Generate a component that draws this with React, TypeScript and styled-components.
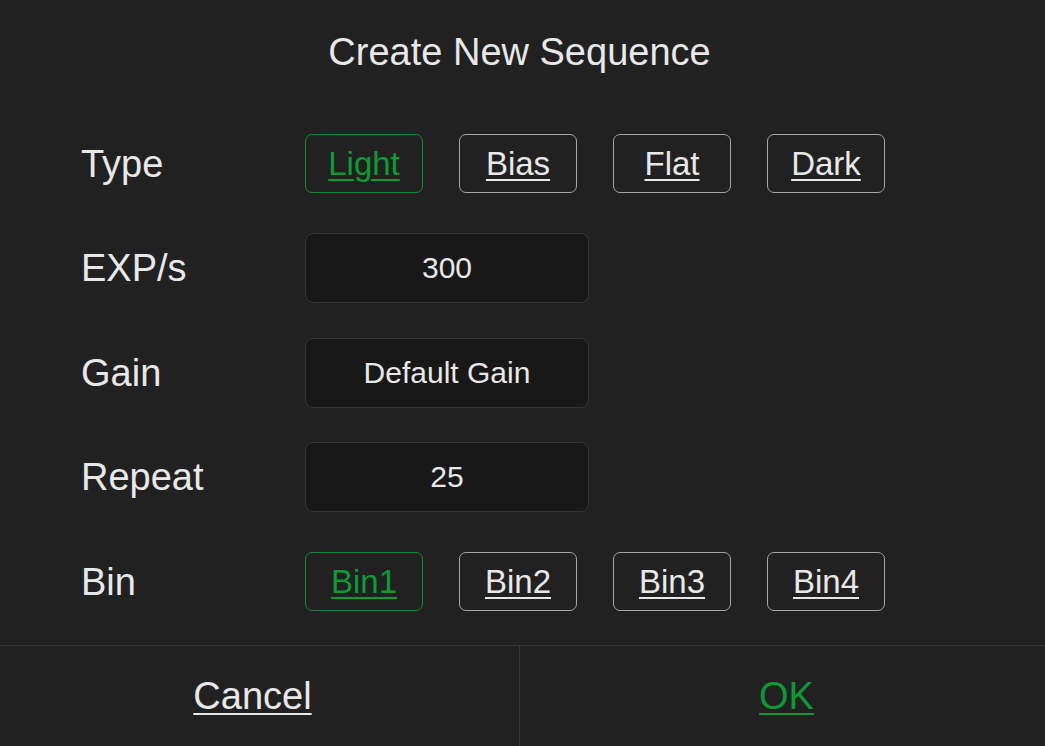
import React, { useState } from 'react';
import styled, { createGlobalStyle } from 'styled-components';

const GlobalStyle = createGlobalStyle`
  html, body {
    margin: 0;
    padding: 0;
    background: #212121;
  }
  body {
    font-family: "Liberation Sans", Arial, sans-serif;
  }
`;

const Dialog = styled.div`
  display: flex;
  flex-direction: column;
  width: 1045px;
  height: 746px;
  background: #212121;
  color: #e8e8e8;
  overflow: hidden;
`;

const Header = styled.div`
  height: 112px;
  display: flex;
  justify-content: center;
  align-items: flex-start;
  padding: 30px 6px 0 0;
  box-sizing: border-box;
`;

const Title = styled.h1`
  margin: 0;
  font-size: 38px;
  line-height: 44px;
  font-weight: 400;
  color: #e8e8e8;
`;

const Form = styled.div`
  display: flex;
  flex-direction: column;
  padding-left: 81px;
`;

const Row = styled.div`
  height: 104.5px;
  display: flex;
  align-items: center;
`;

const Label = styled.div`
  width: 224px;
  font-size: 38px;
  color: #e8e8e8;
`;

const Options = styled.div`
  display: flex;
  gap: 36px;
`;

const Option = styled.button<{ $active?: boolean }>`
  width: 118px;
  height: 59px;
  margin-top: -1px;
  box-sizing: border-box;
  background: transparent;
  border: 1px solid ${(p) => (p.$active ? '#138a32' : '#a6a6a6')};
  border-radius: 7px;
  color: ${(p) => (p.$active ? '#0e9a35' : '#e8e8e8')};
  font-family: "Liberation Sans", Arial, sans-serif;
  font-size: 33px;
  text-decoration: underline;
  text-decoration-thickness: 2px;
  text-underline-offset: 4px;
  cursor: pointer;
  padding: 0;
`;

const Field = styled.div`
  width: 284px;
  height: 70px;
  margin-top: -1px;
  box-sizing: border-box;
  background: #181818;
  border: 1px solid #363636;
  border-radius: 8px;
  display: flex;
  align-items: center;
  justify-content: center;
  font-size: 30px;
  color: #e8e8e8;
`;

const Footer = styled.div`
  margin-top: auto;
  height: 100px;
  border-top: 1px solid #363636;
  display: flex;
`;

const FooterButton = styled.button<{ $primary?: boolean; $divider?: boolean }>`
  flex: ${(p) => (p.$divider ? '0 0 520px' : '1')};
  background: transparent;
  border: none;
  border-right: ${(p) => (p.$divider ? '1px solid #363636' : 'none')};
  color: ${(p) => (p.$primary ? '#0e9a35' : '#e8e8e8')};
  font-family: "Liberation Sans", Arial, sans-serif;
  font-size: 38px;
  text-decoration: underline;
  text-decoration-thickness: 2px;
  text-underline-offset: 4px;
  cursor: pointer;
  padding: ${(p) => (p.$divider ? '0 14px 0 0' : '0 0 0 8px')};
`;

const types = ['Light', 'Bias', 'Flat', 'Dark'];
const bins = ['Bin1', 'Bin2', 'Bin3', 'Bin4'];

export default function App(): React.ReactElement {
  const [type, setType] = useState('Light');
  const [bin, setBin] = useState('Bin1');

  return (
    <Dialog>
      <GlobalStyle />
      <Header>
        <Title>Create New Sequence</Title>
      </Header>
      <Form>
        <Row>
          <Label>Type</Label>
          <Options>
            {types.map((t) => (
              <Option key={t} $active={t === type} onClick={() => setType(t)}>
                {t}
              </Option>
            ))}
          </Options>
        </Row>
        <Row>
          <Label>EXP/s</Label>
          <Field>300</Field>
        </Row>
        <Row>
          <Label>Gain</Label>
          <Field>Default Gain</Field>
        </Row>
        <Row>
          <Label>Repeat</Label>
          <Field>25</Field>
        </Row>
        <Row>
          <Label>Bin</Label>
          <Options>
            {bins.map((b) => (
              <Option key={b} $active={b === bin} onClick={() => setBin(b)}>
                {b}
              </Option>
            ))}
          </Options>
        </Row>
      </Form>
      <Footer>
        <FooterButton $divider>Cancel</FooterButton>
        <FooterButton $primary>OK</FooterButton>
      </Footer>
    </Dialog>
  );
}
